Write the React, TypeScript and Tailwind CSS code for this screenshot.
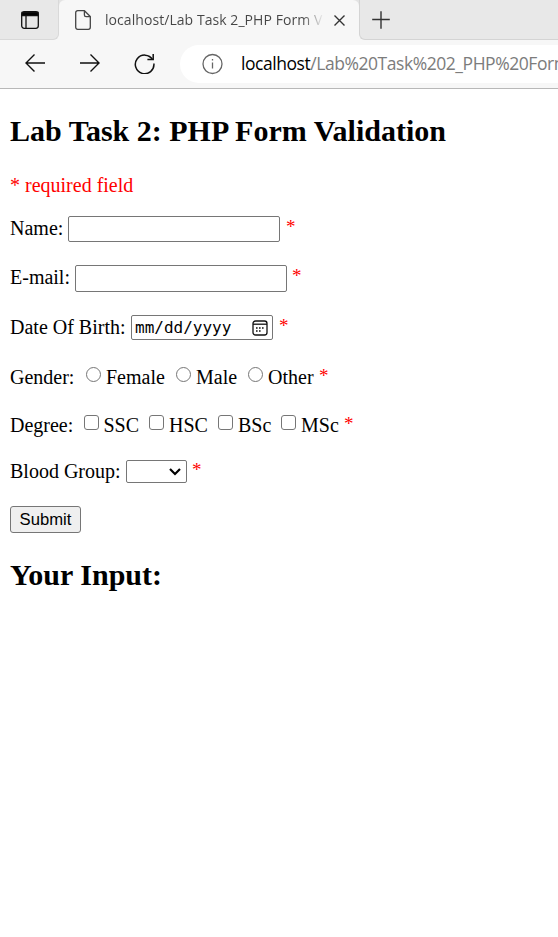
import React from "react";

function Star({ className = "" }: { className?: string }) {
  return <span className={`text-[19px] leading-[22px] text-[#ff0000] ${className}`}>*</span>;
}

function Row({ className = "", children }: { className?: string; children: React.ReactNode }) {
  return <div className={`flex h-6 items-start whitespace-nowrap leading-6 ${className}`}>{children}</div>;
}

function TextBox({ className = "", label }: { className?: string; label: string }) {
  return (
    <input
      type="text"
      aria-label={label}
      className={`w-[212px] shrink-0 rounded-[2px] border border-[#767676] bg-white px-1 outline-none ${className}`}
    />
  );
}

function Choice({ type, label, className }: { type: "radio" | "checkbox"; label: string; className: string }) {
  return (
    <label className={`flex shrink-0 ${className}`}>
      <input
        type={type}
        name={type === "radio" ? "gender" : label}
        className={`mr-[5px] mt-[2px] size-[15px] shrink-0 appearance-none border border-[#767676] bg-white ${
          type === "radio" ? "rounded-full" : "rounded-[3px]"
        }`}
      />
      {label}
    </label>
  );
}

function TabStrip() {
  return (
    <div className="flex h-10 bg-[#f7f7f7]">
      <div className="flex w-[59px] shrink-0 rounded-br-[6px] border-r border-b border-[#d9d9d9] bg-[#e8e8e8] pl-[21px] pt-[11px]">
        <svg width="18" height="18" viewBox="0 0 18 18" fill="none" stroke="#111" strokeWidth="1.3">
          <rect x="0.7" y="0.7" width="16.6" height="16.6" rx="2.5" />
          <path d="M1 1.5h16v3H1z" fill="#000" />
          <path d="M5 5v12" />
        </svg>
      </div>
      <div className="w-[300px] shrink-0 bg-[#e3e3e3]">
        <div className="flex h-10 items-start rounded-t-[6px] bg-[#f7f7f7]">
          <svg className="ml-4 mt-[10px] shrink-0" width="16" height="20" viewBox="0 0 16 20" fill="none" stroke="#444" strokeWidth="1.3">
            <path d="M2.7.7h6.7l5.9 5.9v10.7a2 2 0 0 1-2 2H2.7a2 2 0 0 1-2-2V2.7a2 2 0 0 1 2-2Z" />
            <path d="M9.4.9v4a1.7 1.7 0 0 0 1.700 1.700h4" />
          </svg>
          <div className="ml-[14px] mt-[10px] w-[219px] overflow-hidden whitespace-nowrap bg-linear-to-r from-[#454545] from-90% to-transparent bg-clip-text font-['Open_Sans',sans-serif] text-[14px] leading-5 tracking-[0.06px] text-transparent">
            localhost/Lab Task 2_PHP Form V
          </div>
          <svg className="ml-[10px] mt-[15px]" width="11" height="11" viewBox="0 0 11 11" stroke="#333" strokeWidth="1.4">
            <path d="M.5.5l10 10M10.5.5l-10 10" />
          </svg>
        </div>
      </div>
      <div className="grow rounded-bl-[6px] border-b border-l border-[#d4d4d4] bg-[#e8e8e8] pl-3 pt-[11px]">
        <svg width="18" height="18" viewBox="0 0 18 18" stroke="#333" strokeWidth="1.4">
          <path d="M9 .2v17.6M.2 8.5h17.6" />
        </svg>
      </div>
    </div>
  );
}

function Toolbar() {
  return (
    <div className="flex h-[49px] items-start border-b border-[#b8b8b8] bg-[#f7f7f7]">
      <svg className="ml-[25px] mt-[14px] shrink-0" width="20" height="18" viewBox="0 0 20 18" fill="none" stroke="#111" strokeWidth="1.4">
        <path d="M20 9H1M9.5.5L1 9l8.5 8.5" />
      </svg>
      <svg className="ml-[35px] mt-[14px] shrink-0" width="20" height="18" viewBox="0 0 20 18" fill="none" stroke="#111" strokeWidth="1.4">
        <path d="M0 9h19M10.5.5L19 9l-8.500 8.500" />
      </svg>
      <svg className="ml-[34px] mt-[13px] shrink-0" width="21" height="21" viewBox="0 0 21 21" fill="none" stroke="#111" strokeWidth="1.5">
        <path d="M18.600 6.600A9.300 9.300 0 1 0 19.900 10.500" />
        <path d="M19.200 1v5.600h-5.800" />
      </svg>
      <div className="ml-[25px] mt-[5px] flex h-[38px] min-w-0 grow items-start overflow-hidden rounded-l-full bg-white">
        <svg className="ml-[22px] mt-2 shrink-0" width="22" height="22" viewBox="0 0 22 22" fill="none" stroke="#666" strokeWidth="1.3">
          <circle cx="10.500" cy="11" r="9.500" />
          <path d="M10.500 9.500v6M10.500 6v1.600" />
        </svg>
        <div className="ml-[17px] mt-[6px] whitespace-nowrap font-['Open_Sans',sans-serif] text-[17.5px] leading-6 tracking-[-0.45px] text-[#7c7c7c]">
          <span className="text-black">localhost</span>/Lab%20Task%202_PHP%20Form
        </div>
      </div>
    </div>
  );
}

export default function App() {
  return (
    <div className="h-[937px] w-[558px] overflow-hidden bg-white font-['Liberation_Serif',serif] text-[20px] text-black">
      <TabStrip />
      <Toolbar />
      <main className="pl-[10px]">
        <h2 className="mt-[25px] h-[34px] whitespace-nowrap text-[30px] font-bold leading-[34px]">Lab Task 2: PHP Form Validation</h2>
        <p className="mt-[25px] h-6 leading-6 text-[#ff0000]">* required field</p>
        <form>
          <Row className="mt-[19px]">
            <span className="w-[58px] shrink-0">Name:</span>
            <TextBox label="Name" className="h-[26px]" />
            <Star className="ml-[6px]" />
          </Row>
          <Row className="mt-[25px]">
            <span className="w-[65px] shrink-0">E-mail:</span>
            <TextBox label="E-mail" className="h-[27px]" />
            <Star className="ml-[5px]" />
          </Row>
          <Row className="mt-[26px]">
            <span className="w-[121px] shrink-0">Date Of Birth:</span>
            <div className="flex h-[25px] w-[142px] shrink-0 items-center justify-between rounded-[2px] border border-[#767676] pl-[3px] pr-[4px]">
              <span className="font-['DejaVu_Sans_Mono',monospace] text-[16px] leading-5">mm/dd/yyyy</span>
              <svg width="16" height="16" viewBox="0 0 16 16" fill="none" stroke="#111" strokeWidth="1.3">
                <rect x="1" y="1" width="14" height="14" rx="2.500" />
                <path d="M1 4.200h14" />
                <path d="M4 8h1.600M7 8h1.600M10 8h1.600M4 11h1.600M7 11h1.600" strokeWidth="1.600" />
              </svg>
            </div>
            <Star className="ml-[6px]" />
          </Row>
          <Row className="mt-[26px]">
            <span className="w-[76px] shrink-0">Gender:</span>
            <Choice type="radio" label="Female" className="w-[90px]" />
            <Choice type="radio" label="Male" className="w-[72px]" />
            <Choice type="radio" label="Other" className="w-[71px]" />
            <Star />
          </Row>
          <Row className="mt-6">
            <span className="w-[73.5px] shrink-0">Degree:</span>
            <Choice type="checkbox" label="SSC" className="w-[65.5px]" />
            <Choice type="checkbox" label="HSC" className="w-[69px]" />
            <Choice type="checkbox" label="BSc" className="w-[63px]" />
            <Choice type="checkbox" label="MSc" className="w-[63px]" />
            <Star />
          </Row>
          <Row className="mt-[22px]">
            <span className="w-[116px] shrink-0">Blood Group:</span>
            <div className="mt-[1px] flex h-[23px] w-[61px] shrink-0 items-center justify-end rounded-[2px] border border-[#767676] pr-[5px]">
              <svg width="12" height="8" viewBox="0 0 12 8" fill="none" stroke="#000" strokeWidth="2.200">
                <path d="M1 1l5 5 5-5" />
              </svg>
            </div>
            <Star className="ml-[5px]" />
          </Row>
          <button type="button" className="mt-[23px] block h-[27px] w-[71px] rounded-[3px] border border-[#767676] bg-[#efefef] font-['Liberation_Sans',sans-serif] text-[16.667px] leading-6">
            Submit
          </button>
        </form>
        <h2 className="mt-[25px] h-[34px] text-[30px] font-bold leading-[34px]">Your Input:</h2>
      </main>
    </div>
  );
}
